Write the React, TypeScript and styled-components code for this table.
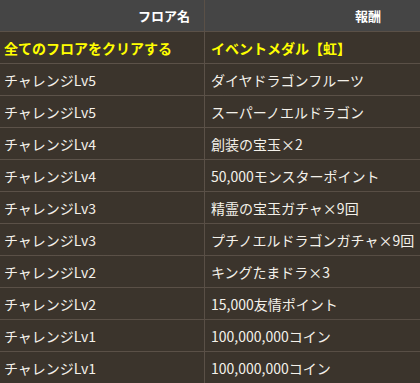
import React from 'react';
import styled, { createGlobalStyle } from 'styled-components';

const GlobalStyle = createGlobalStyle`
    html, body {
        margin: 0;
        padding: 0;
        background: #3a332b;
    }
    body {
        font-family: "Noto Sans CJK JP", "Noto Sans", sans-serif;
    }
`;

interface IReward {
    floor: string;
    reward: string;
    highlight?: boolean;
}

const rewards: IReward[] = [
    { floor: '全てのフロアをクリアする', reward: 'イベントメダル【虹】', highlight: true },
    { floor: 'チャレンジLv5', reward: 'ダイヤドラゴンフルーツ' },
    { floor: 'チャレンジLv5', reward: 'スーパーノエルドラゴン' },
    { floor: 'チャレンジLv4', reward: '創装の宝玉×2' },
    { floor: 'チャレンジLv4', reward: '50,000モンスターポイント' },
    { floor: 'チャレンジLv3', reward: '精霊の宝玉ガチャ×9回' },
    { floor: 'チャレンジLv3', reward: 'プチノエルドラゴンガチャ×9回' },
    { floor: 'チャレンジLv2', reward: 'キングたまドラ×3' },
    { floor: 'チャレンジLv2', reward: '15,000友情ポイント' },
    { floor: 'チャレンジLv1', reward: '100,000,000コイン' },
    { floor: 'チャレンジLv1', reward: '100,000,000コイン' },
];

const Table = styled.div`
    width: 420px;
    height: 383px;
    overflow: hidden;
    display: grid;
    grid-template-columns: 204px 1fr;
    grid-auto-rows: 31px;
    row-gap: 1px;
    column-gap: 1px;
    background-color: #5a5047;
    background-image:
        radial-gradient(circle at 20% 30%, rgba(255, 255, 255, 0.02), transparent 40%),
        radial-gradient(circle at 80% 70%, rgba(0, 0, 0, 0.05), transparent 40%);
`;

const HeadCell = styled.div<{ $padRight: number }>`
    background: #454545;
    color: #ffffff;
    font-size: 13px;
    font-weight: bold;
    display: flex;
    align-items: center;
    justify-content: flex-end;
    padding-right: ${(p) => p.$padRight}px;
`;

const Cell = styled.div<{ $highlight?: boolean; $padLeft: number }>`
    background: #3b342c;
    color: ${(p) => (p.$highlight ? '#ffff00' : '#f4f1ea')};
    font-weight: ${(p) => (p.$highlight ? 'bold' : 'normal')};
    font-size: 14px;
    display: flex;
    align-items: center;
    padding-left: ${(p) => p.$padLeft}px;
    white-space: nowrap;
`;

const App: React.FunctionComponent = () => {
    return (
        <>
            <GlobalStyle />
            <Table>
                <HeadCell $padRight={14}>フロア名</HeadCell>
                <HeadCell $padRight={39}>報酬</HeadCell>
                {rewards.map((r, i) => (
                    <React.Fragment key={i}>
                        <Cell $highlight={r.highlight} $padLeft={4}>{r.floor}</Cell>
                        <Cell $highlight={r.highlight} $padLeft={6}>{r.reward}</Cell>
                    </React.Fragment>
                ))}
            </Table>
        </>
    );
};

export default App;
